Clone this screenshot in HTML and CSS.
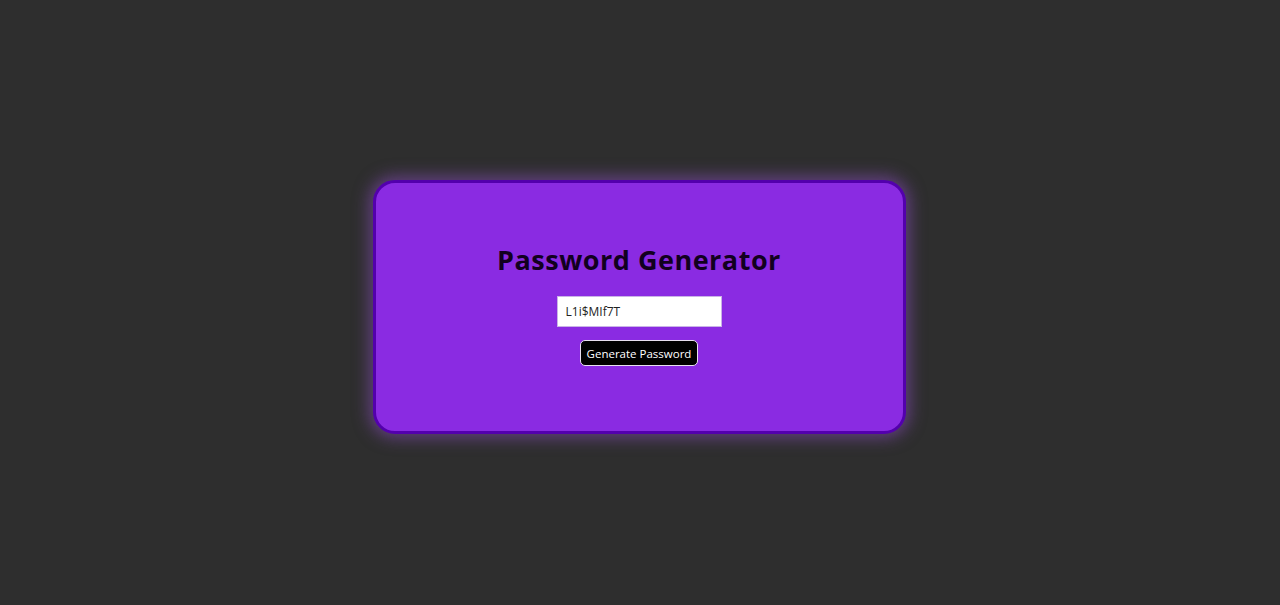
FILE: index.html
```html
<!DOCTYPE html>
<html lang="en">
<head>
<meta charset="utf-8">
<title>Password Generator</title>
<link rel="stylesheet" href="styles.css">
</head>
<body>
<main class="card">
  <h1 class="title">Password Generator</h1>
  <input class="password" type="text" value="L1i$MIf7T" readonly>
  <button class="generate" type="button">Generate Password</button>
</main>
</body>
</html>
```
FILE: styles.css
```css
html, body {
  margin: 0;
  padding: 0;
}
body {
  background: #2e2e2e;
  min-height: 100vh;
  display: flex;
  flex-direction: column;
  align-items: center;
  padding-top: 180px;
  box-sizing: border-box;
  font-family: "Open Sans", "DejaVu Sans", sans-serif;
}
.card {
  box-sizing: border-box;
  width: 533px;
  height: 254px;
  margin-left: -2px;
  background: #8a2be2;
  border: 3px solid #5300ad;
  border-radius: 22px;
  box-shadow: 0 0 16px 4px rgba(150, 80, 210, 0.5);
  display: flex;
  flex-direction: column;
  align-items: center;
  padding-top: 60px;
}
.title {
  margin: 0;
  font-size: 27px;
  line-height: 34px;
  font-weight: 700;
  color: #12001f;
  letter-spacing: 0.5px;
}
.password {
  margin-top: 19px;
  box-sizing: border-box;
  width: 165px;
  height: 31px;
  border: 1px solid #c9b3e6;
  background: #fff;
  padding: 0 8px;
  font-family: "Open Sans", "DejaVu Sans", sans-serif;
  font-size: 12px;
  color: #222;
  outline: none;
}
.generate {
  margin-top: 13px;
  box-sizing: border-box;
  width: 118px;
  height: 26px;
  background: #000;
  color: #fff;
  border: 1px solid #e8e0f0;
  border-radius: 5px;
  font-family: "Open Sans", "DejaVu Sans", sans-serif;
  font-size: 11.5px;
  white-space: nowrap;
  padding: 0;
}
```
